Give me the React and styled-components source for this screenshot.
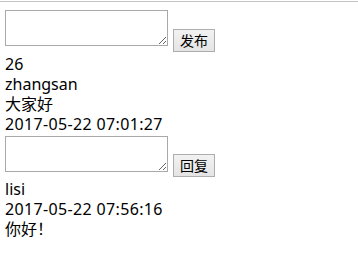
import React from "react";
import styled, { createGlobalStyle } from "styled-components";

const GlobalStyle = createGlobalStyle`
  html, body {
    margin: 0;
    padding: 0;
    background: #ffffff;
  }
  body {
    font-family: "Noto Sans", "Noto Sans CJK SC", sans-serif;
    font-size: 16px;
    color: #000000;
  }
`;

const Rule = styled.div`
  margin-top: 1px;
  height: 0;
  border-top: 1px solid #c4c4c4;
`;

const Content = styled.div`
  padding: 0 5px;
`;

const Composer = styled.form`
  display: flex;
  align-items: flex-start;
  gap: 5px;
  margin: ${(p) => (p.$first ? "8px 0 2px" : "2px 0 2px")};
`;

const TextBox = styled.textarea`
  box-sizing: border-box;
  width: 163px;
  height: 36px;
  margin: 0;
  padding: 2px;
  border: 1px solid #a9a9a9;
  border-radius: 0;
  background: #ffffff;
  font-family: "Liberation Mono", monospace;
  font-size: 13px;
`;

const ActionButton = styled.button`
  box-sizing: border-box;
  height: 23px;
  margin-top: ${(p) => p.$offset}px;
  padding: 0 6px;
  border: 1px solid #adadad;
  border-radius: 0;
  background: linear-gradient(#f2f2f2, #e4e4e4);
  color: #000000;
  font-family: "Noto Sans CJK SC", sans-serif;
  font-size: 14px;
  line-height: 21px;
`;

const Line = styled.div`
  line-height: 20px;
  height: 20px;
  white-space: nowrap;
  letter-spacing: ${(p) => (p.$time ? "0.35px" : "normal")};
`;

const post = {
  id: 26,
  user: "zhangsan",
  content: "大家好",
  time: "2017-05-22 07:01:27",
};

const replies = [{ user: "lisi", time: "2017-05-22 07:56:16", content: "你好！" }];

export default function App() {
  return (
    <>
      <GlobalStyle />
      <Rule />
      <Content>
        <Composer $first onSubmit={(e) => e.preventDefault()}>
          <TextBox />
          <ActionButton type="button" $offset={19}>发布</ActionButton>
        </Composer>
        <Line>{post.id}</Line>
        <Line>{post.user}</Line>
        <Line>{post.content}</Line>
        <Line $time>{post.time}</Line>
        <Composer onSubmit={(e) => e.preventDefault()}>
          <TextBox />
          <ActionButton type="button" $offset={18}>回复</ActionButton>
        </Composer>
        {replies.map((r) => (
          <React.Fragment key={r.time}>
            <Line>{r.user}</Line>
            <Line $time>{r.time}</Line>
            <Line>{r.content}</Line>
          </React.Fragment>
        ))}
      </Content>
    </>
  );
}
